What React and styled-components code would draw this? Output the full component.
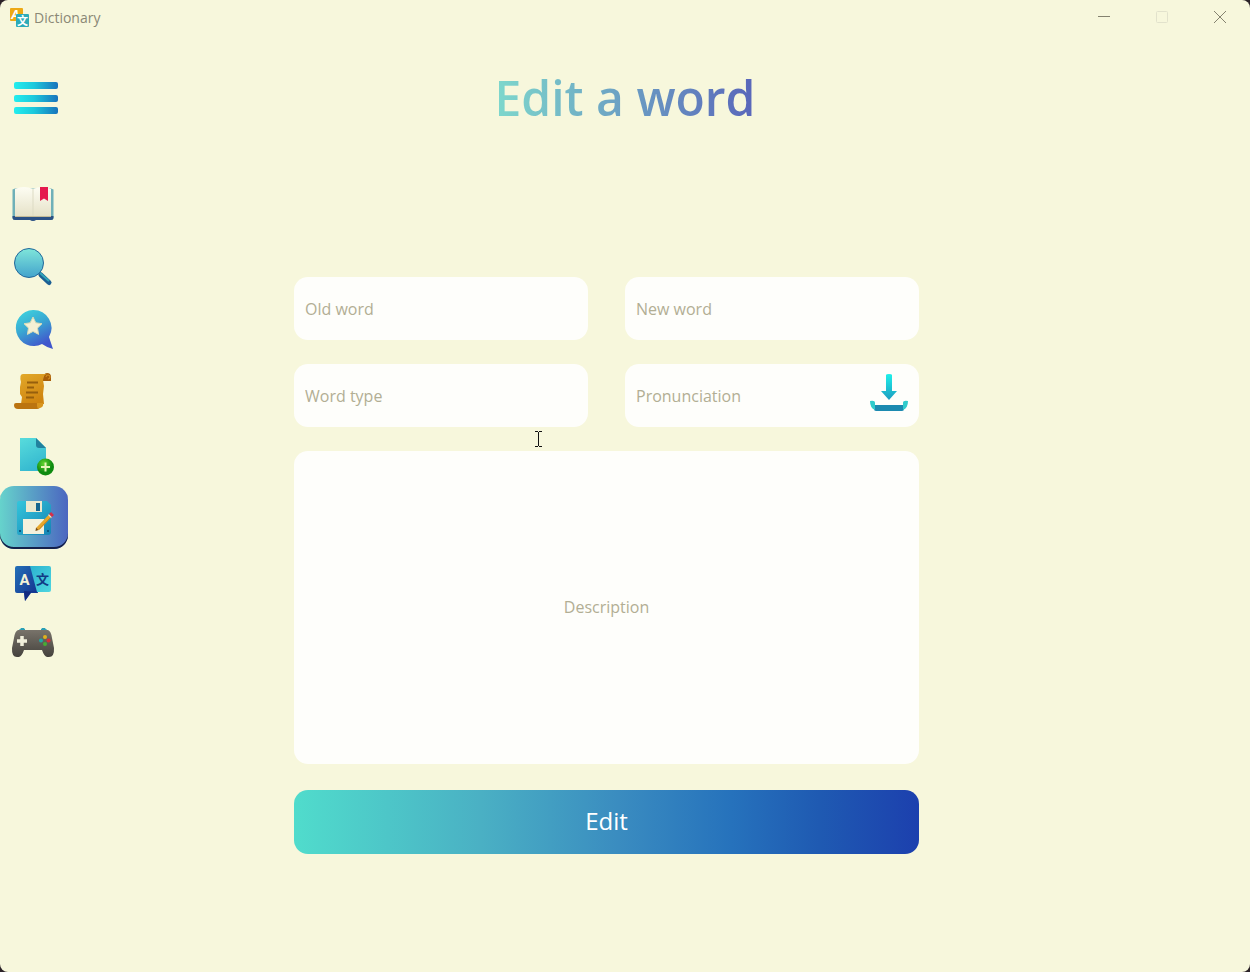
import React from "react";
import styled, { createGlobalStyle } from "styled-components";

const GlobalStyle = createGlobalStyle`
  *, *::before, *::after { box-sizing: border-box; }
  html { background: #2b2228; }
  body {
    margin: 0;
    font-family: "Open Sans", "Noto Sans", sans-serif;
  }
  button, input, textarea { font-family: inherit; }
`;

const Window = styled.div`
  display: flex;
  flex-direction: column;
  min-height: 100vh;
  border-radius: 8px;
  overflow: hidden;
  background: #f7f7dc;
`;

const TitleBar = styled.header`
  display: flex;
  align-items: center;
  height: 34px;
  padding: 0 1px 0 9px;
  color: #8a8876;
`;

const AppName = styled.span`
  flex: 1;
  padding: 2px 0 0 4px;
  font-size: 14px;
  line-height: 20px;
`;

const WindowButton = styled.button`
  display: grid;
  place-items: center;
  width: 58px;
  height: 34px;
  padding: 0;
  border: 0;
  background: none;
  color: ${(p) => (p.$dim ? "#e2e2cc" : "#84826f")};
`;

const Body = styled.div`
  display: grid;
  grid-template-columns: 68px minmax(0, 1fr) 68px;
  flex: 1;
  padding-top: 33px;
`;

const Sidebar = styled.nav`
  display: flex;
  flex-direction: column;
`;

const MenuButton = styled.button`
  width: 68px;
  height: 63px;
  margin: 0 0 41px;
  padding: 0;
  border: 0;
  background: none;
`;

const NavButton = styled.button`
  width: 68px;
  height: 63px;
  padding: 0;
  border: 0;
  border-radius: 14px;
  background: ${(p) =>
    p.$active ? "linear-gradient(90deg, #66d3cc, #4b66c0)" : "none"};
  box-shadow: ${(p) => (p.$active ? "inset 0 -2px 0 #14204a" : "none")};
`;

const Icon = styled.svg`
  display: block;
`;

const Main = styled.main`
  display: flex;
  flex-direction: column;
`;

const Title = styled.h1`
  align-self: center;
  margin: 0 0 148px;
  font-size: 48px;
  font-weight: 600;
  line-height: 62px;
  color: transparent;
  background: linear-gradient(90deg, #7ed8cc, #5966ba);
  background-clip: text;
`;

const Form = styled.form`
  display: grid;
  grid-template-columns: repeat(2, minmax(0, 1fr));
  gap: 24px 37px;
  margin: 0 263px 32px 226px;
`;

const Field = styled.div`
  position: relative;
  display: flex;
`;

const TextInput = styled.input`
  width: 100%;
  height: 63px;
  padding: 0 11px;
  border: 0;
  border-radius: 14px;
  background: #fefefb;
  font-size: 16px;
  font-weight: 500;
  color: #55533f;
  &::placeholder { color: #b2ae94; opacity: 1; }
`;

const Description = styled.textarea`
  grid-column: 1 / -1;
  display: block;
  width: 100%;
  height: 313px;
  padding: 144px 11px 0;
  border: 0;
  border-radius: 14px;
  background: #fefefb;
  resize: none;
  text-align: center;
  font-size: 16px;
  font-weight: 500;
  line-height: 24px;
  color: #55533f;
  &::placeholder { color: #b2ae94; opacity: 1; }
`;

const UploadButton = styled.button`
  position: absolute;
  top: 8px;
  right: 9px;
  padding: 0;
  border: 0;
  background: none;
`;

const SubmitButton = styled.button`
  grid-column: 1 / -1;
  height: 64px;
  margin-top: 2px;
  padding: 0 0 2px;
  border: 0;
  border-radius: 14px;
  background: linear-gradient(90deg, #50dccc, #4ab0c4 30%, #3a8cc0 52%, #2672bc 70%, #1f5ab2 84%, #1c40ae);
  color: #fff;
  font-size: 24px;
  font-weight: 500;
  line-height: 32px;
`;

const Pointer = styled.svg`
  position: absolute;
  right: 45px;
  bottom: -21px;
  pointer-events: none;
`;

const Gradients = () => (
  <svg width="0" height="0" style={{ position: "absolute" }} aria-hidden="true">
    <defs>
      <linearGradient id="bar"><stop stopColor="#22eeee" /><stop offset=".45" stopColor="#1cc9dc" /><stop offset="1" stopColor="#1873bc" /></linearGradient>
      <linearGradient id="lens" x2="0" y2="1"><stop stopColor="#7fe6da" /><stop offset="1" stopColor="#43a3cc" /></linearGradient>
      <linearGradient id="bubble" x2=".5" y2="1"><stop stopColor="#3fdae0" /><stop offset=".5" stopColor="#39a8d2" /><stop offset="1" stopColor="#4056cc" /></linearGradient>
      <linearGradient id="scroll" x2=".5" y2="1"><stop stopColor="#e2a92a" /><stop offset="1" stopColor="#cf8410" /></linearGradient>
      <linearGradient id="file" x2=".4" y2="1"><stop stopColor="#58dcdc" /><stop offset="1" stopColor="#35b9d0" /></linearGradient>
      <radialGradient id="plus" cx=".4" cy=".3"><stop stopColor="#63d52f" /><stop offset="1" stopColor="#0e8a10" /></radialGradient>
      <linearGradient id="disk" x2="1" y2="1"><stop stopColor="#33c6dc" /><stop offset="1" stopColor="#1683b4" /></linearGradient>
      <linearGradient id="paper" x2="0" y2="1"><stop stopColor="#fdfdf3" /><stop offset="1" stopColor="#e6e2c8" /></linearGradient>
      <linearGradient id="navy" x2="1" y2="1"><stop stopColor="#2370b8" /><stop offset="1" stopColor="#122a8a" /></linearGradient>
      <linearGradient id="sky" x2="1" y2="1"><stop stopColor="#2bb3d0" /><stop offset="1" stopColor="#4fd6e0" /></linearGradient>
      <linearGradient id="pad" x2="0" y2="1"><stop stopColor="#78736a" /><stop offset="1" stopColor="#45423d" /></linearGradient>
      <linearGradient id="arrow" x2="0" y2="1"><stop stopColor="#1ff0ea" /><stop offset="1" stopColor="#1c9cc0" /></linearGradient>
    </defs>
  </svg>
);

const icons = {
  Dictionary: (
    <>
      <path d="M12.5 18.5L15 17.5H51L53.5 18.5V47Q53.5 49 51 49H15Q12.5 49 12.5 47Z" fill="#6fb0b8" />
      <path d="M12.5 45H53.5V47Q53.5 49 51 49H36Q35 50 33 50T30 49H15Q12.5 49 12.5 47Z" fill="#2b5185" />
      <path d="M15 18Q24 14 33 18Q42 14 51 18V45H15Z" fill="url(#paper)" />
      <path d="M33 18V46" stroke="#dddbc4" />
      <path d="M15 45.5H51" stroke="#c4bb98" />
      <path d="M40 16H48V30L44 27.5L40 30Z" fill="#e5194d" />
    </>
  ),
  Search: (
    <>
      <path d="M38.5 38L42 42" stroke="#2e8da6" strokeWidth="3" />
      <path d="M41 41L49 48.5" stroke="#1c5f94" strokeWidth="5" strokeLinecap="round" />
      <path d="M40 39L49 47" stroke="#31a5b8" strokeWidth="2" />
      <circle cx="29" cy="29" r="14.5" fill="url(#lens)" stroke="#22679a" />
    </>
  ),
  Favourites: (
    <>
      <path d="M33 13A18 18 0 0 1 49 40L53 52Q46 50 42 47A18 18 0 1 1 33 13Z" fill="url(#bubble)" />
      <path d="M33 20L35.8 25.8L42 26.7L37.5 31.1L38.6 37.4L33 34.4L27.4 37.4L28.5 31.1L24 26.7L30.2 25.8Z" fill="#f4f0d4" stroke="#d8dcb6" strokeLinejoin="round" />
    </>
  ),
  History: (
    <>
      <path d="M43 20Q43 13 47 13Q51 13 51 17V21H43Z" fill="#a85e08" />
      <path d="M46 17A2 2 0 1 1 48 19" fill="none" stroke="#d99322" />
      <path d="M23 14H47Q43 15 43 20L44 26L43 34L44 44H21L22 37L20 34V27L21 22Q19 14 23 14Z" fill="url(#scroll)" />
      <path d="M16 43H43Q40 49 37 49H18Q14 49 14 45Q14 43 16 43Z" fill="#bb7410" />
      <path d="M43 43Q44 47 40 48Q37 49 37 46V43Z" fill="#d9951d" />
      <path d="M27 22.5H38M27 27.5H34M26 32.5H38M26 37.5H34" stroke="#965f0d" strokeWidth="1.8" />
    </>
  ),
  "Add a word": (
    <>
      <path d="M20 15H36L46 25V48H20Z" fill="url(#file)" />
      <path d="M36 15L46 25H39Q36 25 36 22Z" fill="#21819e" />
      <circle cx="45.5" cy="44" r="8.5" fill="url(#plus)" />
      <path d="M45.5 39.5V48.5M41 44H50" stroke="#e7f5ba" strokeWidth="2" />
    </>
  ),
  "Edit a word": (
    <>
      <path d="M19 15H47L51 19V46Q51 49 48 49H19Q17 49 17 46V17Q17 15 19 15Z" fill="url(#disk)" />
      <path d="M26 15H42V26H26Z" fill="#ece9cf" />
      <path d="M36 17H40V25H36Z" fill="#17658e" />
      <path d="M23 33H44V48H23Z" fill="#f4f1dc" />
      <path d="M19 45H21M47 45H49" stroke="#0b5a83" strokeWidth="2" />
      <path d="M37.5 43L50 30" stroke="#e8a72b" strokeWidth="3.5" />
      <path d="M39 43.5L51 31" stroke="#c9801a" />
      <path d="M35.5 45L36 41.5L38.5 44Z" fill="#7b4a0c" />
      <path d="M49.5 30.5L50.5 29.5" stroke="#e6e2d0" strokeWidth="4" />
      <path d="M50.5 29.5L52.5 27.5" stroke="#d72d48" strokeWidth="4" />
    </>
  ),
  Translate: (
    <>
      <path d="M15 19Q15 17 17 17H32L38 44H31L25 52L24 44H17Q15 44 15 42Z" fill="url(#navy)" />
      <path d="M30 17H49Q51 17 51 19V41Q51 43 49 43H37Z" fill="url(#sky)" />
      <path d="M37 43H31L25 52L24 42Z" fill="#122a80" />
      <text x="19.5" y="36" fontSize="15" fontWeight="700" fontFamily="Roboto, sans-serif" fill="#f2f1d6">A</text>
      <text x="36" y="35" fontSize="13" fontWeight="700" fontFamily="Noto Sans CJK SC, sans-serif" fill="#123a85">文</text>
    </>
  ),
  Games: (
    <>
      <path d="M19 18.5L21 16.5H24L25 18.5ZM41 18.5L42 16.5H45L47 18.5Z" fill="#2a9fb6" stroke="#2a9fb6" />
      <path d="M18 18H48Q51 19 52 26L54 36Q54.500 45 49 45H47Q44 44 42 38H24Q22 44 19 45H17Q11.500 45 12 36L14 26Q15 19 18 18Z" fill="url(#pad)" />
      <path d="M22 24V34M17 29H27" stroke="#f1efdb" strokeWidth="3.5" />
      <circle cx="45" cy="25" r="2" fill="#e0b31b" />
      <circle cx="41" cy="28.500" r="2" fill="#22a7a5" />
      <circle cx="48.5" cy="28.500" r="2" fill="#da2d38" />
      <circle cx="45" cy="32" r="2" fill="#46ad34" />
    </>
  ),
};

export default function App() {
  return (
    <Window>
      <GlobalStyle />
      <Gradients />
      <TitleBar>
        <Icon width="21" height="20" viewBox="0 0 21 20" aria-hidden="true">
          <rect x="1" y="1" width="13" height="13" rx="1" fill="#eda914" />
          <text x="2.5" y="11.5" fontSize="12" fontWeight="700" fontStyle="italic" fill="#fff">A</text>
          <rect x="7" y="7" width="13" height="13" rx="1" fill="#2cabb8" />
          <text x="8" y="17.5" fontSize="11" fontWeight="700" fontFamily="Noto Sans CJK SC, sans-serif" fill="#fff">文</text>
        </Icon>
        <AppName>Dictionary</AppName>
        <WindowButton type="button" aria-label="Minimize">
          <Icon width="12" height="12"><path d="M0 5.5H12" stroke="currentColor" /></Icon>
        </WindowButton>
        <WindowButton type="button" aria-label="Maximize" $dim>
          <Icon width="12" height="12"><rect x=".5" y=".5" width="11" height="11" rx="1" fill="none" stroke="currentColor" /></Icon>
        </WindowButton>
        <WindowButton type="button" aria-label="Close">
          <Icon width="12" height="12"><path d="M0 0L12 12M12 0L0 12" stroke="currentColor" /></Icon>
        </WindowButton>
      </TitleBar>
      <Body>
        <Sidebar aria-label="Main">
          <MenuButton type="button" aria-label="Menu">
            <Icon width="68" height="63">
              <rect x="14" y="15" width="44" height="7" rx="2" fill="url(#bar)" />
              <rect x="14" y="28" width="44" height="7" rx="2" fill="url(#bar)" />
              <rect x="14" y="40" width="44" height="7" rx="2" fill="url(#bar)" />
            </Icon>
          </MenuButton>
          {Object.entries(icons).map(([name, art]) => (
            <NavButton key={name} type="button" aria-label={name} $active={name === "Edit a word"}>
              <Icon width="68" height="63" viewBox="0 0 68 63">{art}</Icon>
            </NavButton>
          ))}
        </Sidebar>
        <Main>
          <Title>Edit a word</Title>
          <Form onSubmit={(e) => e.preventDefault()}>
            <Field><TextInput aria-label="Old word" placeholder="Old word" /></Field>
            <Field><TextInput aria-label="New word" placeholder="New word" /></Field>
            <Field>
              <TextInput aria-label="Word type" placeholder="Word type" />
              <Pointer width="9" height="17" aria-hidden="true">
                <path d="M1 .5H4M5 .5H8M4.5 1V15M1 15.5H4M5 15.5H8" stroke="#111" fill="none" />
              </Pointer>
            </Field>
            <Field>
              <TextInput aria-label="Pronunciation" placeholder="Pronunciation" />
              <UploadButton type="button" aria-label="Load pronunciation">
                <Icon width="44" height="42">
                  <path d="M20 3Q20 2 23 2T26 3V19H31L23 28L15 19H20Z" fill="url(#arrow)" />
                  <path d="M8 33H38V37Q38 39 36 39H10Q8 39 8 37Z" fill="#1c8ab0" />
                  <path d="M4 29Q9 28 9 31V38Q4 36 4 29ZM42 29Q37 28 37 31V38Q42 36 42 29Z" fill="#30cbcc" />
                </Icon>
              </UploadButton>
            </Field>
            <Description aria-label="Description" placeholder="Description" />
            <SubmitButton type="submit">Edit</SubmitButton>
          </Form>
        </Main>
      </Body>
    </Window>
  );
}
